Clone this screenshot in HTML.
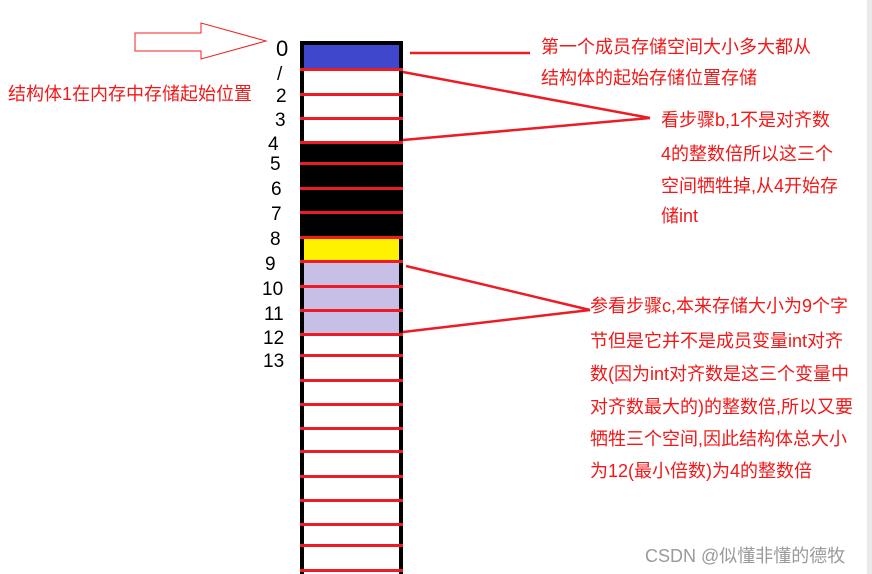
<!DOCTYPE html>
<html><head><meta charset="utf-8"><style>
html,body{margin:0;padding:0;background:#fff;width:872px;height:574px;overflow:hidden}
svg{display:block}
text{font-family:"Liberation Sans","Noto Sans CJK SC",sans-serif;font-size:18px;fill:#f01818}
.k{fill:#000;font-size:19px;font-weight:100}
</style></head><body>
<svg width="872" height="574" viewBox="0 0 872 574">
<rect x="867" y="0" width="5" height="574" fill="#eaeaea"/>
<polygon points="135,33 201,33 201,23 266,41 201,59 201,51 135,51" fill="none" stroke="#f02020" stroke-width="1"/>
<rect x="300" y="41" width="4" height="533" fill="#000"/>
<rect x="399" y="41" width="4" height="533" fill="#000"/>
<rect x="300" y="41" width="103" height="4" fill="#000"/>
<rect x="304" y="45" width="95" height="24" fill="#3f48cc"/>
<rect x="300" y="142" width="103" height="95" fill="#000"/>
<rect x="304" y="237" width="95" height="24" fill="#fff200"/>
<rect x="304" y="261" width="95" height="73" fill="#c8bfe7"/>
<g fill="#ed1c24">
<rect x="300" y="68" width="103" height="3"/>
<rect x="300" y="93" width="103" height="3"/>
<rect x="300" y="117" width="103" height="3"/>
<rect x="300" y="141" width="103" height="3"/>
<rect x="300" y="162" width="103" height="3"/>
<rect x="300" y="187" width="103" height="3"/>
<rect x="300" y="211" width="103" height="3"/>
<rect x="300" y="236" width="103" height="3"/>
<rect x="300" y="260" width="103" height="3"/>
<rect x="300" y="285" width="103" height="3"/>
<rect x="300" y="309" width="103" height="3"/>
<rect x="300" y="333" width="103" height="3"/>
<rect x="300" y="354" width="103" height="3"/>
<rect x="300" y="379" width="103" height="3"/>
<rect x="300" y="403" width="103" height="3"/>
<rect x="300" y="427" width="103" height="3"/>
<rect x="300" y="450" width="103" height="3"/>
<rect x="300" y="475" width="103" height="3"/>
<rect x="300" y="499" width="103" height="3"/>
<rect x="300" y="523" width="103" height="3"/>
<rect x="300" y="544" width="103" height="3"/>
<rect x="300" y="569" width="103" height="3"/>
</g>
<text class="k" x="276" y="56" style="font-size:22px">0</text>
<text class="k" x="277" y="80">/</text>
<text class="k" x="276" y="102">2</text>
<text class="k" x="275" y="126">3</text>
<text class="k" x="268" y="150">4</text>
<text class="k" x="270" y="170">5</text>
<text class="k" x="271" y="195">6</text>
<text class="k" x="271" y="220">7</text>
<text class="k" x="270" y="245">8</text>
<text class="k" x="265" y="270">9</text>
<text class="k" x="262" y="295">10</text>
<text class="k" x="264" y="320">11</text>
<text class="k" x="263" y="344">12</text>
<text class="k" x="263" y="367">13</text>
<g stroke="#ed1c24" stroke-width="2.5" fill="none">
<line x1="410" y1="53" x2="530" y2="53"/>
<line x1="403" y1="72" x2="650" y2="118"/>
<line x1="403" y1="140" x2="650" y2="118"/>
<line x1="406" y1="266" x2="590" y2="310"/>
<line x1="403" y1="332" x2="590" y2="310"/>
</g>
<text x="541" y="53">第一个成员存储空间大小多大都从</text>
<text x="541" y="84">结构体的起始存储位置存储</text>
<text x="8" y="100">结构体1在内存中存储起始位置</text>
<text x="661" y="126">看步骤b,1不是对齐数</text>
<text x="661" y="160">4的整数倍所以这三个</text>
<text x="661" y="192">空间牺牲掉,从4开始存</text>
<text x="661" y="222">储int</text>
<text x="590" y="312">参看步骤c,本来存储大小为9个字</text>
<text x="590" y="347">节但是它并不是成员变量int对齐</text>
<text x="590" y="380">数(因为int对齐数是这三个变量中</text>
<text x="590" y="413">对齐数最大的)的整数倍,所以又要</text>
<text x="590" y="445">牺牲三个空间,因此结构体总大小</text>
<text x="590" y="477">为12(最小倍数)为4的整数倍</text>
<text x="645" y="562" style="fill:#9a9a9a;font-size:18px">CSDN @似懂非懂的德牧</text>
</svg>
</body></html>
